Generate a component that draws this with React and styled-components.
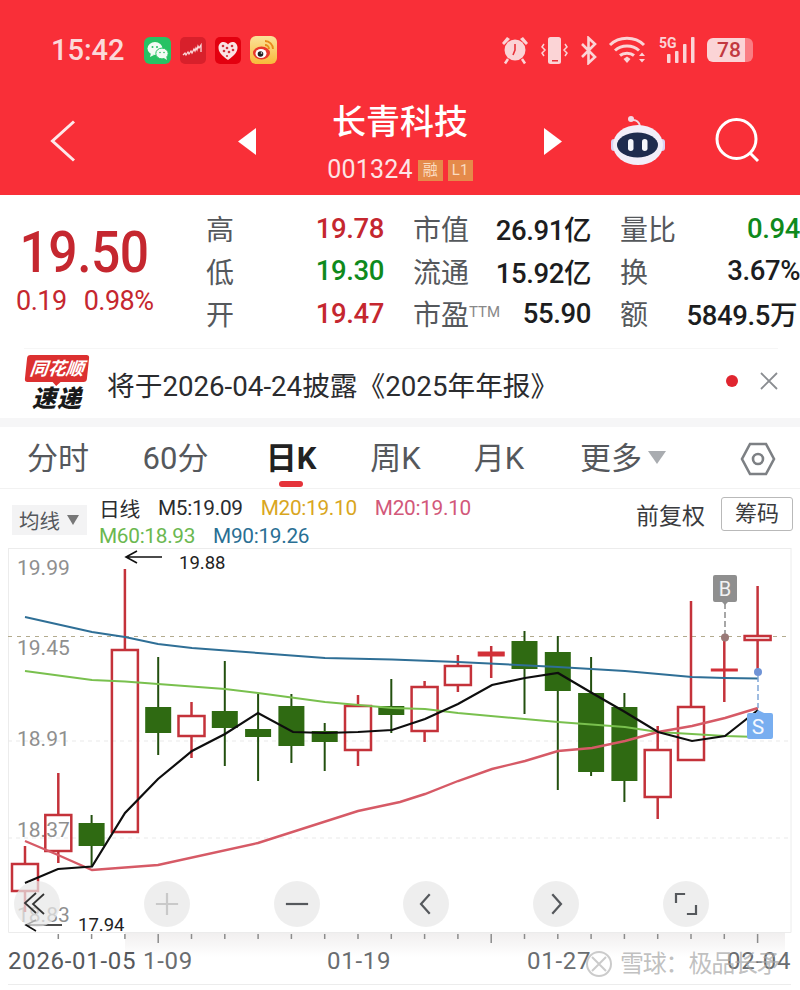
import React from "react";
import styled, { createGlobalStyle } from "styled-components";

const SANS = `Roboto, "Noto Sans CJK SC", sans-serif`;
const RED = "#c5272f";
const GREEN = "#0f8a1c";
const PALE = "#fbd4d6";

const GlobalStyle = createGlobalStyle`
  html, body { margin: 0; padding: 0; background: #fff; }
  body { width: 800px; height: 990px; overflow: hidden; font-family: ${SANS}; }
`;

const Page = styled.div`
  width: 800px;
  height: 990px;
  display: flex;
  flex-direction: column;
  overflow: hidden;
  background: #fff;
`;

/* ---------- red header ---------- */
const Header = styled.header`
  height: 195px;
  flex: none;
  background: #f92f38;
  color: #fff;
  padding: 33px 0 0;
  box-sizing: border-box;
  display: flex;
  flex-direction: column;
`;
const StatusBar = styled.div`
  height: 34px;
  display: flex;
  align-items: center;
  padding: 0 47px 0 51px;
  gap: 9px;
`;
const Clock = styled.span`
  font-size: 29px;
  font-weight: 500;
  color: #fbd9da;
  margin-right: 10px;
`;
const StatusRight = styled.div`
  margin-left: auto;
  display: flex;
  align-items: center;
  gap: 11px;
`;
const Battery = styled.div`
  width: 46px;
  height: 24px;
  border-radius: 6px;
  background: linear-gradient(90deg, ${PALE} 82%, #fa7d83 82%);
  color: #c23840;
  font-size: 21px;
  font-weight: 500;
  line-height: 24px;
  padding-left: 10px;
  box-sizing: border-box;
`;
const NavRow = styled.div`
  flex: 1;
  display: flex;
  align-items: center;
  padding: 10px 0 0 50px;
  margin-top: 10px;
`;
const NavBack = styled.div`
  width: 188px;
  flex: none;
  display: flex;
`;
const NavTitle = styled.div`
  width: 288px;
  flex: none;
  display: flex;
  flex-direction: column;
  align-items: center;
  margin-top: 4px;
`;
const StockName = styled.div`
  font-size: 34px;
  font-weight: 500;
  line-height: 46px;
`;
const StockCode = styled.div`
  display: flex;
  align-items: center;
  gap: 5px;
  font-size: 25px;
  line-height: 34px;
  color: #fde4e5;
  margin-top: 8px;
  letter-spacing: 0.2px;
`;
const CodeTag = styled.span`
  width: 25px;
  height: 21px;
  background: #e58a4a;
  color: #fbdcc0;
  font-size: 15px;
  line-height: 21px;
  text-align: center;
`;
const RobotSlot = styled.div`
  display: flex;
  margin: -3px 0 0 49px;
`;
const SearchSlot = styled.div`
  display: flex;
  margin-left: 50px;
`;

/* ---------- quote panel ---------- */
const Quote = styled.section`
  height: 153px;
  flex: none;
  display: flex;
`;
const PriceBox = styled.div`
  width: 206px;
  flex: none;
  padding: 24px 0 0 16px;
  box-sizing: border-box;
  color: ${RED};
`;
const BigPrice = styled.div`
  font-size: 58px;
  line-height: 66px;
  font-weight: 500;
  letter-spacing: -0.6px;
  padding-left: 4px;
  transform: scaleX(0.89);
  transform-origin: left center;
`;
const PriceChange = styled.div`
  display: flex;
  gap: 17px;
  font-size: 27px;
  line-height: 30px;
  letter-spacing: -0.5px;
  margin-top: 1px;
`;
const QuoteGrid = styled.div`
  flex: 1;
  display: grid;
  grid-template-columns: 207px 207px 180px;
  grid-auto-rows: 42.5px;
  padding-top: 12px;
`;
const Cell = styled.div`
  display: flex;
  justify-content: space-between;
  align-items: center;
  white-space: nowrap;
  padding-right: ${(p) => p.$pad || 0}px;
`;
const Label = styled.span`
  font-size: 28px;
  color: #55585c;
  sup {
    font-size: 15px;
    color: #888;
    vertical-align: 8px;
    line-height: 0;
  }
`;
const Value = styled.span`
  font-size: 27.5px;
  font-weight: 500;
  letter-spacing: -0.4px;
  color: ${(p) => p.$color || "#1c1d20"};
`;

/* ---------- notice ---------- */
const Notice = styled.section`
  height: 70px;
  flex: none;
  display: flex;
  align-items: center;
  margin: 0 22px 0 24px;
  border-top: 1px solid #f6f6f6;
  box-sizing: border-box;
`;
const Logo = styled.div`
  width: 66px;
  flex: none;
  display: flex;
  flex-direction: column;
  align-items: center;
`;
const LogoTop = styled.div`
  position: relative;
  width: 62px;
  height: 27px;
  background: #dc3030;
  border-radius: 3px;
  transform: skewX(-6deg);
  color: #fff;
  font-size: 18px;
  font-weight: 700;
  font-style: italic;
  line-height: 27px;
  text-align: center;
  white-space: nowrap;
  &::after {
    content: "";
    position: absolute;
    left: 28px;
    bottom: -4px;
    width: 0;
    height: 0;
    border-left: 4px solid transparent;
    border-right: 4px solid transparent;
    border-top: 4px solid #dc3030;
  }
`;
const LogoBottom = styled.div`
  font-size: 24px;
  font-weight: 900;
  font-style: italic;
  line-height: 28px;
  color: #1a1a1a;
  margin-top: 3px;
  letter-spacing: 1px;
`;
const NoticeText = styled.div`
  margin-left: 17px;
  font-size: 27.7px;
  color: #2b2c2f;
  white-space: nowrap;
`;
const NoticeDot = styled.span`
  width: 12px;
  height: 12px;
  border-radius: 50%;
  background: #e0252f;
  margin: 0 0 6px auto;
`;
const NoticeClose = styled.div`
  display: flex;
  margin: 0 0 6px 22px;
`;
const Divider = styled.div`
  height: 9px;
  flex: none;
  background: #f6f6f7;
`;

/* ---------- period tabs ---------- */
const Tabs = styled.nav`
  height: 62px;
  flex: none;
  display: flex;
  align-items: center;
  border-bottom: 1px solid #f2f2f2;
  box-sizing: border-box;
  padding-top: 3px;
`;
const Tab = styled.div`
  position: relative;
  width: ${(p) => p.$w}px;
  flex: none;
  font-size: 31px;
  line-height: 44px;
  text-align: center;
  color: ${(p) => (p.$active ? "#222" : "#55585c")};
  font-weight: ${(p) => (p.$active ? 700 : 400)};
  white-space: nowrap;
  &::after {
    content: "";
    display: ${(p) => (p.$active ? "block" : "none")};
    position: absolute;
    left: calc(50% - 12px);
    bottom: -6px;
    width: 24px;
    height: 6px;
    border-radius: 3px;
    background: #e5333a;
  }
`;
const TabCaret = styled.span`
  display: inline-block;
  width: 0;
  height: 0;
  margin-left: 6px;
  vertical-align: 5px;
  border-left: 9px solid transparent;
  border-right: 9px solid transparent;
  border-top: 13px solid #a9acb0;
`;
const TabGear = styled.div`
  margin-left: auto;
  margin-right: 24px;
  display: flex;
`;

/* ---------- legend row ---------- */
const Legend = styled.div`
  height: 59px;
  flex: none;
  display: flex;
  padding: 5px 7px 0 12px;
  box-sizing: border-box;
  align-items: flex-start;
`;
const MaSelect = styled.div`
  width: 75px;
  height: 30px;
  margin-top: 11px;
  background: #f3f3f4;
  color: #55585c;
  font-size: 20.5px;
  white-space: nowrap;
  display: flex;
  align-items: center;
  padding-left: 7px;
  gap: 7px;
  flex: none;
  box-sizing: border-box;
`;
const SmallCaret = styled.span`
  width: 0;
  height: 0;
  border-left: 6px solid transparent;
  border-right: 6px solid transparent;
  border-top: 10px solid #777;
`;
const MaLines = styled.div`
  margin-left: 12px;
  display: flex;
  flex-direction: column;
`;
const MaLine = styled.div`
  display: flex;
  gap: 18px;
  height: 28px;
  align-items: center;
  white-space: nowrap;
`;
const MaItem = styled.span`
  font-size: 20.8px;
  letter-spacing: -0.3px;
  color: ${(p) => p.$color};
`;
const LegendRight = styled.div`
  margin-left: auto;
  display: flex;
  align-items: center;
  gap: 16px;
  margin-top: 3px;
`;
const AdjustText = styled.span`
  font-size: 23px;
  color: #3a3b3e;
`;
const ChipsButton = styled.div`
  width: 70px;
  height: 32px;
  border: 1px solid #b9b9b9;
  border-radius: 3px;
  font-size: 22px;
  line-height: 32px;
  text-align: center;
  color: #3a3b3e;
`;

/* ---------- chart ---------- */
const ChartArea = styled.div`
  position: relative;
  flex: 1;
`;
const ChartSvg = styled.svg`
  display: block;
`;
const ControlBar = styled.div`
  position: absolute;
  top: 333px;
  left: 14px;
  width: 695px;
  display: flex;
  justify-content: space-between;
`;
const RoundButton = styled.div`
  width: 46px;
  height: 46px;
  border-radius: 50%;
  background: rgba(232, 232, 232, 0.72);
  display: flex;
  align-items: center;
  justify-content: center;
`;
const Watermark = styled.div`
  position: absolute;
  top: 398px;
  left: 585px;
  display: flex;
  align-items: center;
  gap: 7px;
  font-size: 24px;
  letter-spacing: -1.2px;
  line-height: 36px;
  color: rgba(165, 165, 165, 0.7);
  white-space: nowrap;
`;

const UP_RED = "#c4323a";
const DOWN_GREEN = "#2f6a12";

const candleX = (i) => 25 + i * 33.3;

// wick top, wick bottom, body top, body bottom, all in page y
const CANDLES = [
  ["up", 847, 913, 865, 892],
  ["up", 774, 864, 816, 852],
  ["down", 816, 867, 824, 847],
  ["up", 570, 833, 651, 833],
  ["down", 658, 756, 708, 734],
  ["up", 703, 759, 717, 737],
  ["down", 662, 767, 712, 729],
  ["down", 695, 782, 730, 738],
  ["down", 695, 764, 707, 747],
  ["down", 724, 772, 732, 743],
  ["up", 696, 767, 707, 751],
  ["down", 680, 734, 707, 716],
  ["up", 682, 743, 688, 732],
  ["up", 656, 693, 667, 686],
  ["flat", 647, 679, 653, 656],
  ["down", 632, 715, 642, 670],
  ["down", 637, 791, 653, 692],
  ["down", 658, 777, 694, 773],
  ["down", 694, 803, 708, 782],
  ["up", 727, 820, 751, 798],
  ["up", 602, 761, 708, 761],
  ["flat", 638, 703, 670, 671],
  ["up", 587, 673, 637, 641],
];

const M5 = "25,884 58,870 92,867.5 125,814 158,780 192,752 225,735 258,714 293,733 325,734 358,733 392,731 425,720 458,705 492,686 525,679 558,674 592,694 625,713 658,733 692,742 725,737 758,711";
const M20 = "25,842 58,856 92,871 158,866 258,844 358,812 400,803 425,795 458,782 492,770 525,762 558,752 592,749 625,742 658,733 692,727 725,719 758,709";
const M60 = "25,672 92,681 125,682.5 158,685 225,690 258,694 325,703 392,709 425,710 458,714 558,723 625,728 658,733 692,735 725,737 758,738";
const M90 = "25,618 92,633 125,638 158,645 192,649 258,654 325,659 392,660.5 458,663 558,668 625,672 692,678 725,679 758,679.5";

const AXIS_TICKS = Array.from({ length: 22 }, (_, i) => i + 1);

const PRICE_LABELS = [
  ["19.99", 576],
  ["19.45", 656],
  ["18.91", 747],
  ["18.37", 838],
  ["18.83", 923],
];

const DATE_LABELS = [
  ["2026-01-05", 8, "#55585c"],
  ["1-09", 143, "#6a6d70"],
  ["01-19", 327, "#6a6d70"],
  ["01-27", 527, "#6a6d70"],
  ["02-04", 727, "#6a6d70"],
];

const Candle = ({ i, kind, wickTop, wickBottom, bodyTop, bodyBottom }) => {
  const x = candleX(i);
  if (kind === "flat") {
    return (
      <g>
        <line x1={x} x2={x} y1={wickTop} y2={wickBottom} stroke={UP_RED} strokeWidth="2.5" />
        <rect x={x - 13} y={bodyTop} width="26" height={bodyBottom - bodyTop + 1} fill="#d23038" stroke="#d23038" />
      </g>
    );
  }
  if (kind === "up") {
    return (
      <g>
        <line x1={x} x2={x} y1={wickTop} y2={bodyTop} stroke={UP_RED} strokeWidth="2.5" />
        <line x1={x} x2={x} y1={bodyBottom} y2={wickBottom} stroke={UP_RED} strokeWidth="2.5" />
        <rect x={x - 13} y={bodyTop} width="26" height={bodyBottom - bodyTop} fill="none" stroke={UP_RED} strokeWidth="2.5" />
      </g>
    );
  }
  return (
    <g>
      <line x1={x} x2={x} y1={wickTop} y2={wickBottom} stroke="#23500f" strokeWidth="2" />
      <rect x={x - 13} y={bodyTop} width="26" height={bodyBottom - bodyTop} fill={DOWN_GREEN} />
    </g>
  );
};

const WeChatIcon = () => (
  <svg width="27" height="27" viewBox="0 0 27 27">
    <rect width="27" height="27" rx="6" fill="#27c264" />
    <ellipse cx="11" cy="11.5" rx="7.5" ry="6.5" fill="#f2fbf5" />
    <path d="M7 16l-1 4 4-2z" fill="#f2fbf5" />
    <ellipse cx="18" cy="16.5" rx="6.2" ry="5.4" fill="#f2fbf5" stroke="#27c264" />
    <path d="M20 21l3 2-1-4z" fill="#f2fbf5" />
    <circle cx="8.5" cy="10" r="1" fill="#27c264" />
    <circle cx="13" cy="10" r="1" fill="#27c264" />
    <circle cx="16" cy="15.5" r=".8" fill="#27c264" />
    <circle cx="20" cy="15.5" r=".8" fill="#27c264" />
  </svg>
);

const TickerIcon = () => (
  <svg width="26" height="27" viewBox="0 0 26 27">
    <rect width="26" height="27" rx="5" fill="#d8202b" />
    <path d="M3 18l2-2 1 2 2-3 1 2 2-3 1 2 2-4 1 2 1-3 1 2 1-4 1 2 2-3v7" fill="none" stroke="#fbdada" strokeWidth="1.3" />
  </svg>
);

const HeartIcon = () => (
  <svg width="26" height="27" viewBox="0 0 26 27">
    <rect width="26" height="27" rx="5" fill="#e3000f" />
    <path d="M13 23C6 18 3.5 14.5 3.5 10.5 3.5 7 6 5 8.5 5c2 0 3.5 1 4.500 2.500C14 6 15.500 5 17.500 5c2.500 0 5 2 5 5.500 0 4-2.500 7.500-9.500 12.500z" fill="#fbe3e4" />
    <g fill="#d0303c">
      <circle cx="8" cy="9" r="1.3" />
      <circle cx="12" cy="11" r="1.3" />
      <circle cx="17" cy="9" r="1.3" />
      <circle cx="9" cy="14" r="1.3" />
      <circle cx="14" cy="15" r="1.3" />
      <circle cx="18" cy="13" r="1.3" />
      <circle cx="12" cy="19" r="1.1" />
    </g>
  </svg>
);

const WeiboIcon = () => (
  <svg width="27" height="28" viewBox="0 0 27 28">
    <defs>
      <linearGradient id="weiboBg" x1="0" y1="0" x2="0" y2="1">
        <stop offset="0" stopColor="#fbe39a" />
        <stop offset="1" stopColor="#f8b93a" />
      </linearGradient>
    </defs>
    <rect width="27" height="28" rx="6" fill="url(#weiboBg)" />
    <ellipse cx="11.5" cy="17" rx="8.5" ry="6.5" fill="#e8382c" />
    <ellipse cx="11" cy="17.5" rx="5.5" ry="4.5" fill="#fff" />
    <circle cx="10.5" cy="18" r="2.8" fill="#222" />
    <circle cx="11.5" cy="17" r=".8" fill="#fff" />
    <path d="M15 5a8 8 0 0 1 8 8M15 9a4 4 0 0 1 4 4" stroke="#e88a1c" strokeWidth="1.8" fill="none" />
  </svg>
);

const AlarmIcon = () => (
  <svg width="28" height="30" viewBox="0 0 28 30">
    <circle cx="14" cy="15" r="10.5" fill={PALE} />
    <path d="M14 9v6l-2 5" stroke="#e9323a" strokeWidth="1.6" fill="none" />
    <path d="M1 8l5-6 3 2-6 6zM27 8l-5-6-3 2 6 6z" fill={PALE} />
    <path d="M7 24l-3 4.500M21 24l3 4.500" stroke={PALE} strokeWidth="2.5" />
  </svg>
);

const VibrateIcon = () => (
  <svg width="29" height="29" viewBox="0 0 29 29">
    <rect x="8" y="1" width="13" height="27" rx="2.5" fill={PALE} />
    <rect x="12" y="24" width="6" height="1.5" fill="#e9323a" />
    <path d="M4 8L2 11l3 3-3 3 2 3M25 8l2 3-3 3 3 3-2 3" fill="none" stroke={PALE} strokeWidth="1.5" />
  </svg>
);

const BluetoothIcon = () => (
  <svg width="17" height="29" viewBox="0 0 17 29">
    <path d="M2 8l13 13-6.500 6V2L15 8 2 21" fill="none" stroke={PALE} strokeWidth="2.6" />
  </svg>
);

const WifiIcon = () => (
  <svg width="40" height="28" viewBox="0 0 40 28">
    <path d="M2 9c9-9 25-9 34 0M7 14.500c6.500-6 17.500-6 24 0M12 19.500c3.500-3 10.500-3 14 0" fill="none" stroke={PALE} strokeWidth="3" />
    <path d="M15.500 23l3.500-2.500 3.500 2.500-3.500 4z" fill={PALE} />
    <path d="M31 20l3-3.500 3 3.500zM31 23l3 3.500 3-3.500z" fill={PALE} />
  </svg>
);

const SignalIcon = () => (
  <svg width="37" height="28" viewBox="0 0 37 28">
    <text x="0" y="12" fontFamily="Roboto, sans-serif" fontSize="14" fontWeight="700" fill={PALE}>5G</text>
    <g fill={PALE}>
      <rect x="8" y="18" width="3.5" height="9" rx=".8" />
      <rect x="16" y="15" width="3.5" height="12" rx=".8" />
      <rect x="24" y="8" width="3.5" height="19" rx=".8" />
      <rect x="32" y="1" width="3.5" height="26" rx=".8" />
    </g>
  </svg>
);

const RobotIcon = () => (
  <svg width="54" height="52" viewBox="0 0 54 52">
    <circle cx="20" cy="5" r="3" fill="#f3d9e4" />
    <path d="M22 6c4 0 6 2 7 6" fill="none" stroke="#f3d9e4" strokeWidth="1.8" />
    <rect x="0" y="25" width="6" height="12" rx="3" fill="#d9d2f2" />
    <rect x="48" y="25" width="6" height="12" rx="3" fill="#d9d2f2" />
    <ellipse cx="27" cy="31" rx="25" ry="20" fill="#f2eef9" />
    <ellipse cx="26.500" cy="31" rx="20.500" ry="12.500" fill="#1e2b4e" />
    <rect x="17" y="25" width="5.500" height="12" rx="2.750" fill="#f6f7fc" />
    <rect x="31" y="25" width="5.500" height="12" rx="2.750" fill="#f6f7fc" />
  </svg>
);

const ControlIcon = ({ children, color = "#55585c" }) => (
  <svg width="24" height="24" viewBox="0 0 24 24" fill="none" stroke={color} strokeWidth="2.2" strokeLinecap="square">
    {children}
  </svg>
);

const App = () => (
  <Page>
    <GlobalStyle />
    <Header>
      <StatusBar>
        <Clock>15:42</Clock>
        <WeChatIcon />
        <TickerIcon />
        <HeartIcon />
        <WeiboIcon />
        <StatusRight>
          <AlarmIcon />
          <VibrateIcon />
          <BluetoothIcon />
          <WifiIcon />
          <SignalIcon />
          <Battery>78</Battery>
        </StatusRight>
      </StatusBar>
      <NavRow>
        <NavBack>
          <svg width="26" height="42" viewBox="0 0 26 42" fill="none">
            <path d="M24 1.500L2.500 21 24 40.500" stroke="#fde9ea" strokeWidth="3" />
          </svg>
        </NavBack>
        <svg width="18" height="27" viewBox="0 0 18 27">
          <path d="M18 0v27L0 13.500z" fill="#fff" />
        </svg>
        <NavTitle>
          <StockName>长青科技</StockName>
          <StockCode>
            001324
            <CodeTag>融</CodeTag>
            <CodeTag>L1</CodeTag>
          </StockCode>
        </NavTitle>
        <svg width="18" height="27" viewBox="0 0 18 27">
          <path d="M0 0v27l18-13.500z" fill="#fff" />
        </svg>
        <RobotSlot>
          <RobotIcon />
        </RobotSlot>
        <SearchSlot>
          <svg width="46" height="46" viewBox="0 0 46 46" fill="none" stroke="#fff" strokeWidth="3">
            <circle cx="21.500" cy="21" r="19.500" />
            <path d="M35 35l8 8" />
          </svg>
        </SearchSlot>
      </NavRow>
    </Header>

    <Quote>
      <PriceBox>
        <BigPrice>19.50</BigPrice>
        <PriceChange>
          <span>0.19</span>
          <span>0.98%</span>
        </PriceChange>
      </PriceBox>
      <QuoteGrid>
        <Cell $pad={29}><Label>高</Label><Value $color={RED}>19.78</Value></Cell>
        <Cell $pad={29}><Label>市值</Label><Value>26.91亿</Value></Cell>
        <Cell><Label>量比</Label><Value $color={GREEN}>0.94</Value></Cell>
        <Cell $pad={29}><Label>低</Label><Value $color={GREEN}>19.30</Value></Cell>
        <Cell $pad={29}><Label>流通</Label><Value>15.92亿</Value></Cell>
        <Cell><Label>换</Label><Value>3.67%</Value></Cell>
        <Cell $pad={29}><Label>开</Label><Value $color={RED}>19.47</Value></Cell>
        <Cell $pad={29}><Label>市盈<sup>TTM</sup></Label><Value>55.90</Value></Cell>
        <Cell $pad={3}><Label>额</Label><Value>5849.5万</Value></Cell>
      </QuoteGrid>
    </Quote>

    <Notice>
      <Logo>
        <LogoTop>同花顺</LogoTop>
        <LogoBottom>速递</LogoBottom>
      </Logo>
      <NoticeText>将于2026-04-24披露《2025年年报》</NoticeText>
      <NoticeDot />
      <NoticeClose>
        <svg width="18" height="18" viewBox="0 0 18 18" stroke="#8a8d91" strokeWidth="1.8">
          <path d="M1 1l16 16M17 1L1 17" />
        </svg>
      </NoticeClose>
    </Notice>
    <Divider />

    <Tabs>
      <Tab $w={116}>分时</Tab>
      <Tab $w={119}>60分</Tab>
      <Tab $w={112} $active>日K</Tab>
      <Tab $w={97}>周K</Tab>
      <Tab $w={110}>月K</Tab>
      <Tab $w={138}>更多<TabCaret /></Tab>
      <TabGear>
        <svg width="36" height="36" viewBox="0 0 36 36" fill="none" stroke="#7d8084" strokeWidth="2.6">
          <path d="M10 3h16l8 15-8 15H10L2 18z" />
          <circle cx="18" cy="18" r="5" />
        </svg>
      </TabGear>
    </Tabs>

    <Legend>
      <MaSelect>均线<SmallCaret /></MaSelect>
      <MaLines>
        <MaLine>
          <MaItem $color="#2b2c2f">日线</MaItem>
          <MaItem $color="#2b2c2f">M5:19.09</MaItem>
          <MaItem $color="#d9a61e">M20:19.10</MaItem>
          <MaItem $color="#d2587a">M20:19.10</MaItem>
        </MaLine>
        <MaLine>
          <MaItem $color="#6bb84f">M60:18.93</MaItem>
          <MaItem $color="#2a6f94">M90:19.26</MaItem>
        </MaLine>
      </MaLines>
      <LegendRight>
        <AdjustText>前复权</AdjustText>
        <ChipsButton>筹码</ChipsButton>
      </LegendRight>
    </Legend>

    <ChartArea>
      <ChartSvg width="800" height="441" viewBox="0 549 800 441" fontFamily="Roboto, sans-serif">
        <defs>
          <linearGradient id="axisFade" x1="0" y1="0" x2="0" y2="1">
            <stop offset="0" stopColor="#f1efef" />
            <stop offset="1" stopColor="#f1efef" stopOpacity="0" />
          </linearGradient>
        </defs>
        <rect x="125" y="934" width="660" height="24" fill="url(#axisFade)" />
        <path d="M8.5 549v384.500H791V549M8.5 549.500H791" fill="none" stroke="#ececec" />
        <path d="M8 985.500h783" stroke="#ececec" />

        <line x1="8" x2="791" y1="637.5" y2="637.5" stroke="#b3ab8e" strokeDasharray="4 5" />
        <line x1="8" x2="791" y1="742" y2="742" stroke="#e9e9e9" strokeDasharray="4 4" />
        <line x1="8" x2="791" y1="839" y2="839" stroke="#e9e9e9" strokeDasharray="4 4" />

        {AXIS_TICKS.map((i) => (
          <line
            key={i}
            x1={candleX(i)}
            x2={candleX(i)}
            y1="935"
            y2={(i - 4) % 10 === 0 || i === 22 ? 944 : 940}
            stroke="#8c8c8c"
            strokeWidth="1.5"
          />
        ))}

        {PRICE_LABELS.map(([label, y]) => (
          <text key={label} x="17" y={y} fontSize="21" fill="#8f8f8f">{label}</text>
        ))}

        {CANDLES.map(([kind, wickTop, wickBottom, bodyTop, bodyBottom], i) => (
          <Candle
            key={i}
            i={i}
            kind={kind}
            wickTop={wickTop}
            wickBottom={wickBottom}
            bodyTop={bodyTop}
            bodyBottom={bodyBottom}
          />
        ))}

        <polyline points={M90} fill="none" stroke="#2f6f96" strokeWidth="2" />
        <polyline points={M60} fill="none" stroke="#79c04e" strokeWidth="2" />
        <polyline points={M20} fill="none" stroke="#d65a66" strokeWidth="2.4" />
        <polyline points={M5} fill="none" stroke="#0e0e0e" strokeWidth="2.2" />

        {/* buy / sell markers */}
        <line x1="725" x2="725" y1="604" y2="638" stroke="#8a8a8a" strokeWidth="1.5" strokeDasharray="6 3" />
        <circle cx="725" cy="638.5" r="4" fill="#9a7a78" />
        <path d="M715 576h20a2 2 0 0 1 2 2v23a2 2 0 0 1-2 2h-7l-3 3-3-3h-7a2 2 0 0 1-2-2v-23a2 2 0 0 1 2-2z" fill="#8f8f8f" />
        <text x="725" y="597" textAnchor="middle" fontSize="20" fill="#f2f2f2">B</text>

        <line x1="758" x2="758" y1="677" y2="709" stroke="#7fa6d8" strokeWidth="1.5" strokeDasharray="6 3" />
        <circle cx="758" cy="673" r="4" fill="#6f93d6" />
        <path d="M758 711l6 3h7a2 2 0 0 1 2 2v22a2 2 0 0 1-2 2h-22a2 2 0 0 1-2-2v-22a2 2 0 0 1 2-2h7z" fill="#78aef0" />
        <text x="758" y="735" textAnchor="middle" fontSize="21" fill="#f4f8ff">S</text>

        {/* hand-drawn annotations */}
        <path d="M162 558h-36M137 552l-11 6 11 6" fill="none" stroke="#111" strokeWidth="1.6" />
        <text x="179" y="570" fontSize="18.5" fill="#222">19.88</text>
        <path d="M62 926H26M36 921l-10 5 10 6" fill="none" stroke="#111" strokeWidth="1.6" />
        <text x="78" y="932" fontSize="18.5" fill="#222">17.94</text>

        {DATE_LABELS.map(([label, x, color]) => (
          <text key={label} x={x} y="970" fontSize="24" fill={color} letterSpacing=".7">{label}</text>
        ))}
      </ChartSvg>

      <ControlBar>
        <RoundButton>
          <svg width="30" height="30" viewBox="0 0 30 30" fill="none" stroke="#333" strokeWidth="1.8">
            <path d="M14 4L3 14l11 10M22 5L11 15l11 10" />
          </svg>
        </RoundButton>
        <RoundButton>
          <ControlIcon color="#c9c9c9"><path d="M12 2v20M2 12h20" /></ControlIcon>
        </RoundButton>
        <RoundButton>
          <ControlIcon><path d="M2 12h20" /></ControlIcon>
        </RoundButton>
        <RoundButton>
          <ControlIcon><path d="M15 3l-8 9 8 9" /></ControlIcon>
        </RoundButton>
        <RoundButton>
          <ControlIcon><path d="M9 3l8 9-8 9" /></ControlIcon>
        </RoundButton>
        <RoundButton>
          <ControlIcon><path d="M2 10V2h8M22 14v8h-8" /></ControlIcon>
        </RoundButton>
      </ControlBar>

      <Watermark>
        <svg width="28" height="28" viewBox="0 0 28 28" fill="none" stroke="rgba(190,190,190,.8)" strokeWidth="2">
          <circle cx="14" cy="14" r="12" />
          <path d="M7 7l14 14M21 7L7 21" />
        </svg>
        雪球：极品长矛
      </Watermark>
    </ChartArea>
  </Page>
);

export default App;
